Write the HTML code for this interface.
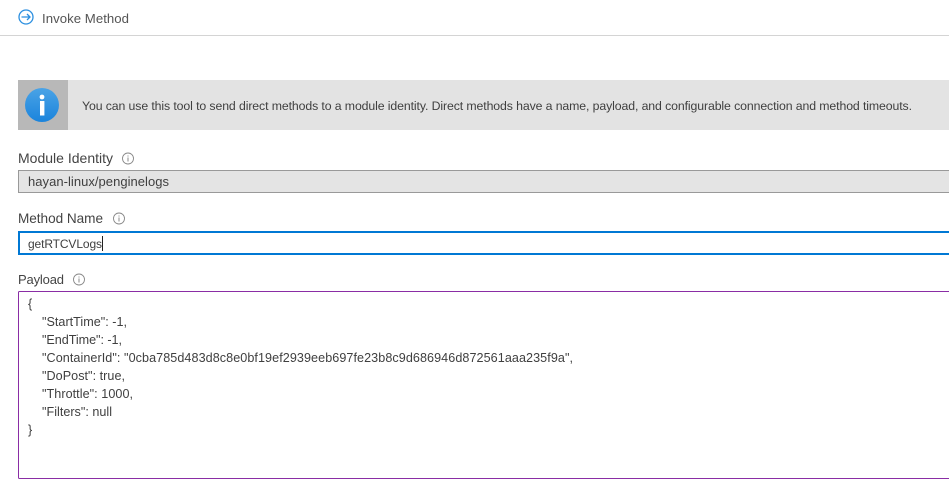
<!DOCTYPE html>
<html>
<head>
<meta charset="utf-8">
<style>
html,body{margin:0;padding:0;background:#fff;width:949px;height:485px;overflow:hidden}
svg{display:block}
text{font-family:"Liberation Sans",sans-serif;fill:#3f3f3f;font-size:12.6px}
</style>
</head>
<body>
<svg width="949" height="485" viewBox="0 0 949 485" xmlns="http://www.w3.org/2000/svg">
<defs>
<linearGradient id="g" x1="0" y1="0" x2="0" y2="1">
<stop offset="0" stop-color="#4aa3e6"/>
<stop offset="1" stop-color="#1b84dc"/>
</linearGradient>
</defs>
<rect width="949" height="485" fill="#fff"/>

<!-- header -->
<circle cx="26" cy="17" r="7" fill="none" stroke="#2b8fe0" stroke-width="1.3"/>
<path d="M21.5 17H30M27 14l3 3-3 3" fill="none" stroke="#2b8fe0" stroke-width="1.3"/>
<text x="42" y="23" textLength="87" lengthAdjust="spacing" style="font-size:13.2px;fill:#555">Invoke Method</text>
<rect x="0" y="35" width="949" height="1" fill="#d4d4d4"/>

<!-- banner -->
<rect x="18" y="80" width="931" height="50" fill="#e3e3e3"/>
<rect x="18" y="80" width="50" height="50" fill="#b8b8b8"/>
<circle cx="42" cy="105" r="17" fill="url(#g)"/>
<circle cx="42" cy="97" r="2.4" fill="#fff"/>
<rect x="40" y="101" width="4.4" height="14.5" fill="#fff"/>
<text x="82" y="110" textLength="830" lengthAdjust="spacing" style="font-size:12.3px">You can use this tool to send direct methods to a module identity. Direct methods have a name, payload, and configurable connection and method timeouts.</text>

<!-- module identity -->
<text x="18" y="163" textLength="95" lengthAdjust="spacing" style="font-size:14px;fill:#444">Module Identity</text>
<circle cx="128" cy="158.5" r="5.5" fill="none" stroke="#888" stroke-width="0.9"/>
<rect x="127.5" y="157.5" width="1" height="4" fill="#888"/>
<rect x="127.5" y="155.5" width="1" height="1" fill="#888"/>
<rect x="18.5" y="170.5" width="940" height="22" fill="#e4e4e4" stroke="#999" stroke-width="1"/>
<text x="28" y="186" textLength="141" lengthAdjust="spacing" style="font-size:13px">hayan-linux/penginelogs</text>

<!-- method name -->
<text x="18" y="223" textLength="85" lengthAdjust="spacing" style="font-size:13.6px;fill:#444">Method Name</text>
<circle cx="119" cy="218.5" r="5.5" fill="none" stroke="#888" stroke-width="0.9"/>
<rect x="118.5" y="217.5" width="1" height="4" fill="#888"/>
<rect x="118.5" y="215.5" width="1" height="1" fill="#888"/>
<rect x="19" y="232" width="940" height="22" fill="#fff" stroke="#0078d4" stroke-width="2"/>
<text x="28" y="248" textLength="74" lengthAdjust="spacing" style="font-size:12px">getRTCVLogs</text>
<rect x="102" y="236" width="1" height="15" fill="#222"/>

<!-- payload -->
<text x="18" y="284" textLength="46" lengthAdjust="spacing" style="font-size:13px;fill:#444">Payload</text>
<circle cx="79" cy="279.5" r="5.5" fill="none" stroke="#888" stroke-width="0.9"/>
<rect x="78.5" y="278.5" width="1" height="4" fill="#888"/>
<rect x="78.5" y="276.5" width="1" height="1" fill="#888"/>
<rect x="18.5" y="291.5" width="940" height="187" rx="1" fill="#fff" stroke="#8a2da5" stroke-width="1"/>
<text x="28" y="308">{</text>
<text x="42" y="326" textLength="85" lengthAdjust="spacing">"StartTime": -1,</text>
<text x="42" y="344" textLength="80" lengthAdjust="spacing">"EndTime": -1,</text>
<text x="42" y="362" textLength="531" lengthAdjust="spacing">"ContainerId": "0cba785d483d8c8e0bf19ef2939eeb697fe23b8c9d686946d872561aaa235f9a",</text>
<text x="42" y="380" textLength="83" lengthAdjust="spacing">"DoPost": true,</text>
<text x="42" y="398" textLength="91" lengthAdjust="spacing">"Throttle": 1000,</text>
<text x="42" y="416" textLength="70" lengthAdjust="spacing">"Filters": null</text>
<text x="28" y="434">}</text>
</svg>
</body>
</html>
